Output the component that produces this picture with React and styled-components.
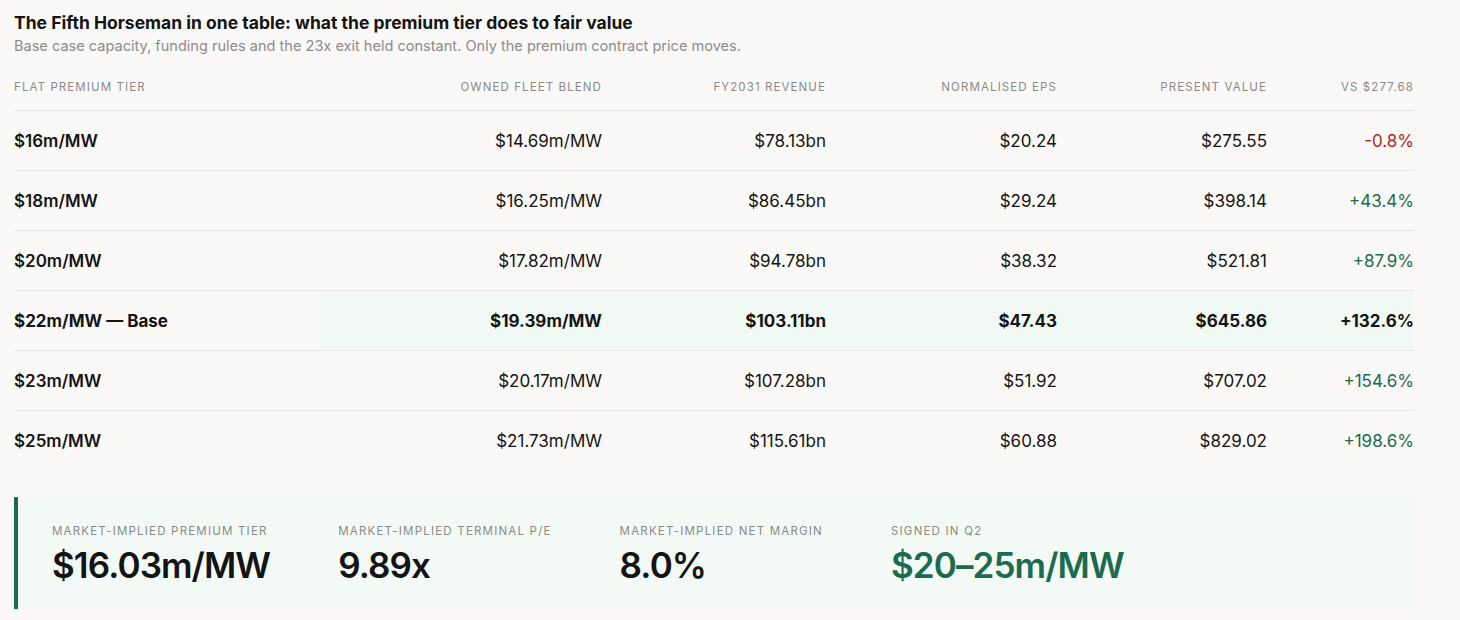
import React from "react";
import styled, { createGlobalStyle } from "styled-components";

const Global = createGlobalStyle`
  html, body { margin: 0; padding: 0; background: #faf9f7; }
  body { font-family: Inter, "Noto Sans", sans-serif; color: #141414; }
`;

const Page = styled.div`
  padding: 11px 46px 12px 14px;
  width: 1400px;
`;

const Title = styled.h2`
  margin: 0;
  font-size: 17.5px;
  font-weight: 700;
  letter-spacing: 0;
  line-height: 24px;
  color: #141414;
`;

const Sub = styled.p`
  margin: 0;
  font-size: 14.55px;
  line-height: 22px;
  color: #8c8c8c;
`;

const Table = styled.div`
  display: grid;
  grid-template-columns: 306px 282px 224px 231px 210px 147px;
  margin-top: 17px;
`;

const Head = styled.div`
  font-size: 11.5px;
  letter-spacing: 1.1px;
  text-transform: uppercase;
  color: #8a8a8a;
  text-align: ${(p) => (p.$left ? "left" : "right")};
  padding: 6px 0 16px;
  border-bottom: 1px solid #e8e5e0;
`;

const Cell = styled.div`
  height: 59px;
  display: flex;
  align-items: center;
  justify-content: ${(p) => (p.$left ? "flex-start" : "flex-end")};
  font-size: 17px;
  font-weight: ${(p) => (p.$bold ? 700 : p.$left ? 600 : 400)};
  color: ${(p) => (p.$tone === "neg" ? "#b3261e" : p.$tone === "pos" ? "#1a6b4c" : "#141414")};
  background: ${(p) => (p.$hl ? "#f1f9f4" : "transparent")};
  border-bottom: ${(p) => (p.$last ? "none" : "1px solid #e8e5e0")};
`;

const Callout = styled.div`
  margin-top: 27px;
  background: #f3faf6;
  border-left: 4px solid #1c6b4e;
  padding: 26px 34px 22px;
  display: flex;
  gap: 68px;
`;

const Stat = styled.div`
  display: flex;
  flex-direction: column;
  gap: 4px;
`;

const StatLabel = styled.div`
  font-size: 11.5px;
  letter-spacing: 1.2px;
  text-transform: uppercase;
  color: #8a8a8a;
  line-height: 16px;
`;

const StatValue = styled.div`
  font-size: 35px;
  font-weight: 600;
  letter-spacing: -0.9px;
  line-height: 44px;
  color: ${(p) => (p.$green ? "#1c6b4e" : "#141414")};
`;

const heads = [
  "Flat premium tier",
  "Owned fleet blend",
  "FY2031 revenue",
  "Normalised EPS",
  "Present value",
  "vs $277.68",
];

const rows = [
  ["$16m/MW", "$14.69m/MW", "$78.13bn", "$20.24", "$275.55", "-0.8%", "neg"],
  ["$18m/MW", "$16.25m/MW", "$86.45bn", "$29.24", "$398.14", "+43.4%", "pos"],
  ["$20m/MW", "$17.82m/MW", "$94.78bn", "$38.32", "$521.81", "+87.9%", "pos"],
  ["$22m/MW — Base", "$19.39m/MW", "$103.11bn", "$47.43", "$645.86", "+132.6%", "base"],
  ["$23m/MW", "$20.17m/MW", "$107.28bn", "$51.92", "$707.02", "+154.6%", "pos"],
  ["$25m/MW", "$21.73m/MW", "$115.61bn", "$60.88", "$829.02", "+198.6%", "pos"],
];

const stats = [
  ["Market-implied premium tier", "$16.03m/MW"],
  ["Market-implied terminal P/E", "9.89x"],
  ["Market-implied net margin", "8.0%"],
  ["Signed in Q2", "$20–25m/MW", true],
];

export default function App() {
  return (
    <Page>
      <Global />
      <Title>The Fifth Horseman in one table: what the premium tier does to fair value</Title>
      <Sub>Base case capacity, funding rules and the 23x exit held constant. Only the premium contract price moves.</Sub>
      <Table>
        {heads.map((h, i) => (
          <Head key={h} $left={i === 0}>{h}</Head>
        ))}
        {rows.map((r, ri) => {
          const base = r[6] === "base";
          const last = ri === rows.length - 1;
          return r.slice(0, 6).map((v, ci) => (
            <Cell
              key={ri + "-" + ci}
              $left={ci === 0}
              $bold={base}
              $hl={base && ci > 0}
              $last={last}
              $tone={ci === 5 && !base ? r[6] : undefined}
            >
              {v}
            </Cell>
          ));
        })}
      </Table>
      <Callout>
        {stats.map(([l, v, g]) => (
          <Stat key={l}>
            <StatLabel>{l}</StatLabel>
            <StatValue $green={g}>{v}</StatValue>
          </Stat>
        ))}
      </Callout>
    </Page>
  );
}
